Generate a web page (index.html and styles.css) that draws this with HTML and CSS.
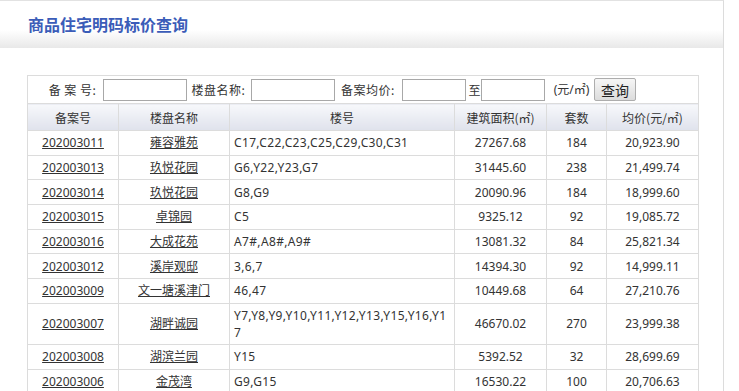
FILE: index.html
```html
<!DOCTYPE html>
<html lang="zh-CN">
<head>
  <meta charset="UTF-8" /><meta name="viewport" content="width=device-width,initial-scale=1">
  <title>商品住宅明码标价查询</title>
  <link rel="stylesheet" href="styles.css">
</head>
<body>
  <div class="page">
    <div class="banner">
      <h1>商品住宅明码标价查询</h1>
    </div>

    <div class="content">
      <table class="price-table">
        <colgroup>
          <col class="c-no"><col class="c-name"><col class="c-bld">
          <col class="c-area"><col class="c-cnt"><col class="c-avg">
        </colgroup>
        <thead>
          <tr class="search-row">
            <td colspan="6">
              <form class="search" onsubmit="return false">
                <label class="l-no">备 案 号:</label>
                <input type="text" class="field">
                <label class="l-name">楼盘名称:</label>
                <input type="text" class="field">
                <label class="l-avg">备案均价:</label>
                <input type="text" class="field short">
                <span class="to">至</span><input type="text" class="field short">
                <span class="unit">(元/㎡)</span>
                <button type="submit">查询</button>
              </form>
            </td>
          </tr>
          <tr class="head-row">
            <th>备案号</th>
            <th>楼盘名称</th>
            <th>楼号</th>
            <th>建筑面积(㎡)</th>
            <th>套数</th>
            <th>均价(元/㎡)</th>
          </tr>
        </thead>
        <tbody>
          <tr><td><a href="#">202003011</a></td><td><a href="#">雍容雅苑</a></td><td class="bld">C17,C22,C23,C25,C29,C30,C31</td><td>27267.68</td><td>184</td><td>20,923.90</td></tr>
          <tr><td><a href="#">202003013</a></td><td><a href="#">玖悦花园</a></td><td class="bld">G6,Y22,Y23,G7</td><td>31445.60</td><td>238</td><td>21,499.74</td></tr>
          <tr><td><a href="#">202003014</a></td><td><a href="#">玖悦花园</a></td><td class="bld">G8,G9</td><td>20090.96</td><td>184</td><td>18,999.60</td></tr>
          <tr><td><a href="#">202003015</a></td><td><a href="#">卓锦园</a></td><td class="bld">C5</td><td>9325.12</td><td>92</td><td>19,085.72</td></tr>
          <tr><td><a href="#">202003016</a></td><td><a href="#">大成花苑</a></td><td class="bld">A7#,A8#,A9#</td><td>13081.32</td><td>84</td><td>25,821.34</td></tr>
          <tr><td><a href="#">202003012</a></td><td><a href="#">溪岸观邸</a></td><td class="bld">3,6,7</td><td>14394.30</td><td>92</td><td>14,999.11</td></tr>
          <tr><td><a href="#">202003009</a></td><td><a href="#">文一塘溪津门</a></td><td class="bld">46,47</td><td>10449.68</td><td>64</td><td>27,210.76</td></tr>
          <tr><td><a href="#">202003007</a></td><td><a href="#">湖畔诚园</a></td><td class="bld">Y7,Y8,Y9,Y10,Y11,Y12,Y13,Y15,Y16,Y17</td><td>46670.02</td><td>270</td><td>23,999.38</td></tr>
          <tr><td><a href="#">202003008</a></td><td><a href="#">湖滨兰园</a></td><td class="bld">Y15</td><td>5392.52</td><td>32</td><td>28,699.69</td></tr>
          <tr><td><a href="#">202003006</a></td><td><a href="#">金茂湾</a></td><td class="bld">G9,G15</td><td>16530.22</td><td>100</td><td>20,706.63</td></tr>
        </tbody>
      </table>
    </div>
  </div>
</body>
</html>
```

FILE: styles.css
```css
* { box-sizing: border-box; }
body {
  margin: 0;
  font-family: "Noto Sans", "Noto Sans CJK SC", sans-serif;
  font-size: 12px;
  color: #333;
  background: #fff;
}
.page {
  width: 724px;
  min-height: 420px;
  border-top: 1px solid #e2e2e2;
  border-right: 1px solid #dcdcdc;
}
.banner {
  height: 47px;
  background: linear-gradient(to bottom, #fff 0, #fff 62%, #e8e8e8 100%);
}
.banner h1 {
  margin: 0;
  padding: 11px 0 0 28px;
  font-family: "Noto Sans CJK SC", sans-serif;
  font-size: 16px;
  font-weight: bold;
  line-height: 24px;
  color: #3b5cb8;
}
.content { padding: 27px 0 0 27px; }

.price-table {
  width: 671px;
  border-collapse: collapse;
  border: 1px solid #dcdcdc;
  table-layout: fixed;
}
.price-table td, .price-table th {
  border: 1px solid #dcdcdc;
  text-align: center;
  padding: 0 4px;
  line-height: 17px;
  font-weight: normal;
}
.c-no { width: 91px; }
.c-name { width: 111px; }
.c-bld { width: 225px; }
.c-area { width: 92px; }
.c-cnt { width: 60px; }
.c-avg { width: 92px; }

.search-row td { height: 28px; padding: 0; }
.search {
  display: flex;
  align-items: center;
  padding-left: 20px;
  font-family: "Noto Sans CJK SC", sans-serif;
}
.search label { white-space: pre; color: #333; letter-spacing: 0.5px; }
.search .l-no { width: 55px; margin-left: -3px; }
.search .l-name { width: 59px; margin-left: -3px; }
.search .l-avg { width: 62px; margin-left: -3px; }
.search .field {
  width: 84px;
  height: 22px;
  margin-right: 5px;
  border: 1px solid #a8a8a8;
  padding: 0 2px;
  font-size: 12px;
}
.search label + .field { margin-left: 3px; }
.search .field.short { width: 64px; margin-right: 2px; }
.search .to { width: 13px; }
.search .unit {
  width: 45px;
  margin-left: 2px;
  font-family: "Noto Sans", "Noto Sans CJK SC", sans-serif;
}
.search button {
  height: 23px;
  width: 42px;
  padding: 0;
  font-family: "Noto Sans CJK SC", sans-serif;
  font-size: 14px;
  color: #222;
  border: 1px solid #adadad;
  border-radius: 2px;
  background: linear-gradient(to bottom, #f6f6f6, #dcdcdc);
}

.head-row th {
  height: 27px;
  background: linear-gradient(to bottom, #f7f8fb, #dfe2ec);
  color: #333;
  font-family: "Noto Sans CJK SC", sans-serif;
}
.price-table tbody td { height: 24.7px; }
.price-table tbody td.bld {
  text-align: left;
  word-break: break-all;
  letter-spacing: 0.35px;
  padding: 3px 4px;
}
.price-table a { color: #333; text-decoration: underline; }
```
